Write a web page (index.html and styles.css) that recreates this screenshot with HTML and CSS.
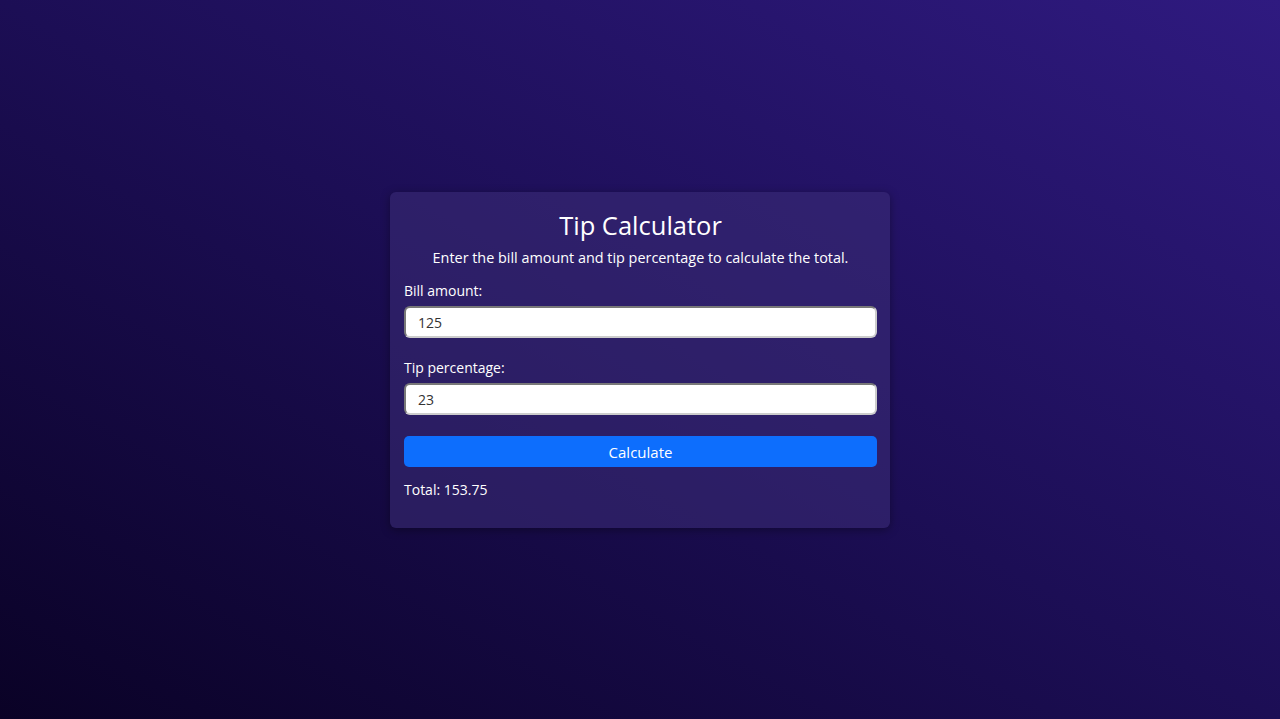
FILE: index.html
```html
<!DOCTYPE html>
<html lang="en">
<head>
<meta charset="utf-8">
<title>Tip Calculator</title>
<link rel="stylesheet" href="styles.css">
</head>
<body>
<main class="page">
  <section class="card">
    <h1 class="title">Tip Calculator</h1>
    <p class="subtitle">Enter the bill amount and tip percentage to calculate the total.</p>
    <label class="label" for="bill">Bill amount:</label>
    <input class="field" id="bill" type="text" value="125">
    <label class="label label-second" for="tip">Tip percentage:</label>
    <input class="field" id="tip" type="text" value="23">
    <button class="btn" type="button">Calculate</button>
    <p class="total">Total: 153.75</p>
  </section>
</main>
</body>
</html>
```
FILE: styles.css
```css
* { box-sizing: border-box; }
html, body { margin: 0; height: 100%; }
body {
  font-family: "Open Sans", "Liberation Sans", sans-serif;
  background: linear-gradient(to top right, #0a0226 0%, #1c0e55 50%, #2f1a80 100%);
  color: #fff;
}
.page {
  height: 719px;
  display: flex;
  align-items: center;
  justify-content: center;
  padding-top: 1px;
}
.card {
  width: 500px;
  background: rgba(60, 45, 120, 0.55);
  border-radius: 6px;
  box-shadow: 0 2px 10px rgba(0, 0, 0, 0.35);
  padding: 16px 13px 28px 14px;
  display: flex;
  flex-direction: column;
}
.title {
  margin: 0;
  text-align: center;
  font-size: 25.5px;
  font-weight: 500;
  line-height: 34px;
}
.subtitle {
  margin: 5px 0 0;
  text-align: center;
  font-size: 14.4px;
  line-height: 22px;
}
.label {
  margin-top: 12px;
  font-size: 14px;
  line-height: 20px;
}
.label-second { margin-top: 20px; }
.field {
  margin-top: 5px;
  height: 32px;
  width: 100%;
  border-radius: 6px;
  border: 2px inset #ccc;
  background: #fff;
  padding: 0 12px;
  font-family: inherit;
  font-size: 14px;
  color: #333;
}
.btn {
  margin-top: 21px;
  height: 31px;
  border: 0;
  border-radius: 5px;
  background: #0d6efd;
  color: #fff;
  font-family: inherit;
  font-size: 15px;
}
.total {
  margin: 13px 0 0;
  font-size: 14px;
  line-height: 20px;
}
```
